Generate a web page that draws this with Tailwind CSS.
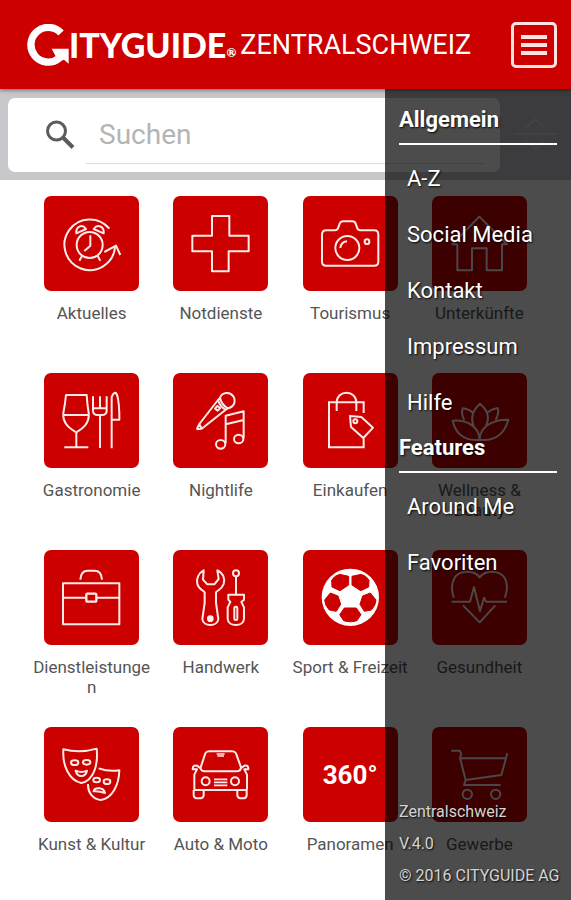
<!DOCTYPE html>
<html lang="de">
<head>
<meta charset="utf-8">
<meta name="viewport" content="width=device-width, initial-scale=1">
<title>Cityguide Zentralschweiz</title>
<script src="https://cdn.jsdelivr.net/npm/@tailwindcss/browser@4"></script>
</head>
<body class="bg-white font-['Roboto',sans-serif]">
<div class="flex min-h-screen flex-col">
  <header class="relative z-20 flex h-[89px] shrink-0 items-center bg-[#cd0000] pr-[14px] pl-[27px] text-white shadow-[0_1px_4px_rgba(0,0,0,0.5)]">
    <a href="#" aria-label="Cityguide" class="flex items-center">
      <svg class="h-[42px] w-[42px] shrink-0" viewBox="80 71 126 126" fill="none" aria-hidden="true">
        <path d="M182 98 A52 52 0 1 0 176 174" stroke="#fff" stroke-width="22"/>
        <path d="M154 145H205V190L191 178L176 184L166 168Z" fill="#fff"/>
      </svg>
      <span class="font-['Lato',sans-serif] text-[34px] leading-[40px] font-black">ITYGUIDE</span>
      <span class="mt-4 font-['Lato',sans-serif] text-[12px] leading-4 font-black">®</span>
    </a>
    <h1 class="ml-1 text-[27px] leading-8">ZENTRALSCHWEIZ</h1>
    <button type="button" aria-label="Menü" class="ml-auto flex h-[46px] w-[46px] shrink-0 flex-col items-center justify-center gap-1 rounded-[5px] border-3 border-[#ffe3e3]">
      <span class="h-1 w-[26px] bg-[#ffe3e3]"></span>
      <span class="h-1 w-[26px] bg-[#ffe3e3]"></span>
      <span class="h-1 w-[26px] bg-[#ffe3e3]"></span>
    </button>
  </header>

  <div class="relative flex-1">
    <form class="flex h-[91px] items-center bg-[#c8c7cc] pr-[14px] pl-2" role="search">
      <div class="flex h-[74px] flex-1 rounded-[7px] bg-white pr-[15px] pl-[37px]">
        <label for="q" aria-label="Suchen" class="flex w-[41px] items-center">
          <svg class="h-[30px] w-[30px]" viewBox="0 0 30 30" fill="none" stroke="#5c5c5c" aria-hidden="true"><circle cx="11.500" cy="11" r="9" stroke-width="3"/><path d="M18 17.500L28 27.500" stroke-width="4"/></svg>
        </label>
        <input id="q" type="text" placeholder="Suchen" class="my-2 h-[58px] w-0 flex-1 border-b border-[#dedede] px-[13px] text-[28px] placeholder:text-[#b4b4b4] focus:outline-none">
      </div>
      <button type="button" aria-label="Sortieren" class="ml-[14px]">
        <svg class="h-9 w-[43px]" viewBox="0 0 43 36" fill="none" stroke="#e4e4e8" stroke-width="1.500" aria-hidden="true"><path d="M12 11L21.500 2L31 11M0 17H43M12 23L21.500 32L31 23"/></svg>
      </button>
    </form>

    <nav aria-label="Kategorien" class="grid grid-cols-4 gap-y-[30px] px-[27px] pt-4 text-[17px] leading-5 text-[#555]">
      <a href="#" class="flex min-h-[147px] flex-col items-center gap-3">
        <svg class="h-[95px] w-[95px] rounded-[7px] bg-[#cd0000]" viewBox="41 31 285 285" fill="none" stroke="#ffeaea" stroke-width="6" stroke-linejoin="round" aria-hidden="true">
          <path d="M237 129A76 76 0 1 0 254 185M222 199L257 180L270 208"/>
          <circle cx="178" cy="178" r="39"/><path d="M180 149V180L162 196M155 211L147 225M202 211L210 225M138 143C136 122 155 114 167 130ZM190 130C202 114 222 122 220 143Z"/>
        </svg>
        <span class="w-[122px] text-center break-words">Aktuelles</span>
      </a>
      <a href="#" class="flex min-h-[147px] flex-col items-center gap-3">
        <svg class="h-[95px] w-[95px] rounded-[7px] bg-[#cd0000]" viewBox="428 31 285 285" fill="none" stroke="#ffeaea" stroke-width="6" stroke-linejoin="round" aria-hidden="true">
          <path d="M545 91H597V150H655V197H595V257H545V197H486V150H545Z"/>
        </svg>
        <span class="w-[122px] text-center break-words">Notdienste</span>
      </a>
      <a href="#" class="flex min-h-[147px] flex-col items-center gap-3">
        <svg class="h-[95px] w-[95px] rounded-[7px] bg-[#cd0000]" viewBox="37 31 285 285" fill="none" stroke="#ffeaea" stroke-width="6" stroke-linejoin="round" aria-hidden="true">
          <path d="M107 134H133Q141 134 143 125L147 114Q150 107 157 107H185Q193 107 195 114L199 125Q201 134 209 134H250Q263 134 263 147V228Q263 240 250 240H107Q94 240 94 228V147Q94 134 107 134Z"/>
          <circle cx="170" cy="187" r="36"/><path d="M149 187Q151 169 169 167"/><circle cx="229" cy="168" r="7"/>
        </svg>
        <span class="w-[122px] text-center break-words">Tourismus</span>
      </a>
      <a href="#" class="flex min-h-[147px] flex-col items-center gap-3">
        <svg class="h-[95px] w-[95px] rounded-[7px] bg-[#cd0000]" viewBox="424 31 285 285" fill="none" stroke="#ffeaea" stroke-width="6" stroke-linejoin="round" aria-hidden="true">
          <path d="M566 93L485 176H500V254H544V188H588V254H634V176H649Z"/>
        </svg>
        <span class="w-[122px] text-center break-words">Unterkünfte</span>
      </a>

      <a href="#" class="flex min-h-[147px] flex-col items-center gap-3">
        <svg class="h-[95px] w-[95px] rounded-[7px] bg-[#cd0000]" viewBox="41 24 285 285" fill="none" stroke="#ffeaea" stroke-width="6" stroke-linejoin="round" aria-hidden="true">
          <path d="M107 90H169Q171 120 175 144C178 175 158 190 138 202C118 190 96 175 99 144Q104 120 107 90ZM99 150H175M138 202V246M102 247H174M188 94V137Q188 148 200 150H217Q229 148 229 137V94M209 94V130M188 130H229M209 150V249M244 250V96Q250 81 257 84Q265 93 267 145V164H245"/>
        </svg>
        <span class="w-[122px] text-center break-words">Gastronomie</span>
      </a>
      <a href="#" class="flex min-h-[147px] flex-col items-center gap-3">
        <svg class="h-[95px] w-[95px] rounded-[7px] bg-[#cd0000]" viewBox="428 24 285 285" fill="none" stroke="#ffeaea" stroke-width="6" stroke-linejoin="round" aria-hidden="true">
          <path d="M569 99C574 82 598 78 609 94C619 112 608 128 593 130Q574 120 569 99L563 105Q569 125 586 134L593 130M563 105L507 177L514 191L586 134M507 177L499 193M514 191L499 193M561 123L570 129L562 137L554 131ZM586 235V152L640 139V220M586 178L640 165"/>
          <ellipse cx="571" cy="238" rx="14" ry="13"/><ellipse cx="625" cy="222" rx="14" ry="13"/>
        </svg>
        <span class="w-[122px] text-center break-words">Nightlife</span>
      </a>
      <a href="#" class="flex min-h-[147px] flex-col items-center gap-3">
        <svg class="h-[95px] w-[95px] rounded-[7px] bg-[#cd0000]" viewBox="37 24 285 285" fill="none" stroke="#ffeaea" stroke-width="6" aria-hidden="true">
          <path d="M219 144V112H115V247H219V221M138 138V113C138 73 197 73 197 113V138"/>
          <path d="M178 153L212 156L247 188L218 219L181 186Z" stroke-linejoin="round"/><circle cx="194" cy="169" r="6"/>
        </svg>
        <span class="w-[122px] text-center break-words">Einkaufen</span>
      </a>
      <a href="#" class="flex min-h-[147px] flex-col items-center gap-3">
        <svg class="h-[95px] w-[95px] rounded-[7px] bg-[#cd0000]" viewBox="424 24 285 285" fill="none" stroke="#ffeaea" stroke-width="6" stroke-linejoin="round" aria-hidden="true">
          <path d="M567 224C567 190 600 163 653 164C644 198 620 230 567 224C520 230 494 204 486 167C530 164 565 185 567 224ZM549 182C538 155 550 132 568 116C587 132 599 155 586 182M521 166C513 150 512 140 516 130Q534 132 547 143M615 165C623 150 625 140 621 129Q603 132 589 143"/>
        </svg>
        <span class="w-[122px] text-center break-words">Wellness &amp; Beauty</span>
      </a>

      <a href="#" class="flex min-h-[147px] flex-col items-center gap-3">
        <svg class="h-[95px] w-[95px] rounded-[7px] bg-[#cd0000]" viewBox="41 31 285 285" fill="none" stroke="#ffeaea" stroke-width="6" stroke-linejoin="round" aria-hidden="true">
          <path d="M98 131H267V254H98ZM98 174H167M199 174H267M150 120C151 101 160 93 172 93H193C207 93 214 103 215 120"/><rect x="168" y="162" width="30" height="24" rx="3" stroke-width="7"/>
        </svg>
        <span class="w-[122px] text-center break-words">Dienstleistungen</span>
      </a>
      <a href="#" class="flex min-h-[147px] flex-col items-center gap-3">
        <svg class="h-[95px] w-[95px] rounded-[7px] bg-[#cd0000]" viewBox="428 31 285 285" fill="none" stroke="#ffeaea" stroke-width="6" stroke-linejoin="round" aria-hidden="true">
          <path d="M520 92C504 100 497 118 501 133C505 148 518 152 523 158V190L516 238C518 262 562 262 564 238L557 190V158C563 151 575 148 580 133C585 116 578 99 561 92L565 118L552 134H531L518 120Z"/>
          <circle cx="540" cy="237" r="7" fill="#ffeaea"/><circle cx="617" cy="101" r="9"/>
          <path d="M617 111V163M594 165H641V180L633 187L641 203V237C640 262 593 262 592 237V203L600 187L594 180Z"/><rect x="612" y="201" width="9" height="40" rx="4"/>
        </svg>
        <span class="w-[122px] text-center break-words">Handwerk</span>
      </a>
      <a href="#" class="flex min-h-[147px] flex-col items-center gap-3">
        <svg class="h-[95px] w-[95px] rounded-[7px] bg-[#cd0000]" viewBox="37 31 285 285" fill="none" aria-hidden="true">
          <circle cx="179" cy="173" r="86" fill="#fff"/>
          <g fill="#cd0000" stroke="#cd0000" stroke-width="3" stroke-linejoin="round"><path d="M174 110V136L148 153L124 142L123 122Q131 108 147 104Z"/><path d="M184 110V136L210 153L234 142L235 122Q227 108 211 104Z"/><path d="M119 160L142 169L150 194L137 215L116 211Q103 198 102 181Z"/><path d="M239 160L216 169L208 194L221 215L242 211Q255 198 256 181Z"/><path d="M161 205H197L211 225L199 243Q179 250 159 243L147 225Z"/></g>
        </svg>
        <span class="w-[122px] text-center break-words">Sport &amp; Freizeit</span>
      </a>
      <a href="#" class="flex min-h-[147px] flex-col items-center gap-3">
        <svg class="h-[95px] w-[95px] rounded-[7px] bg-[#cd0000]" viewBox="424 31 285 285" fill="none" stroke="#ffeaea" stroke-width="6" stroke-linejoin="round" aria-hidden="true">
          <path d="M490 174C478 145 484 108 512 99C535 92 556 98 567 113C578 98 600 92 622 99C650 109 655 145 642 174M517 197L567 248L614 197M483 186H538L550 142L568 215L580 174L586 186H649"/>
        </svg>
        <span class="w-[122px] text-center break-words">Gesundheit</span>
      </a>

      <a href="#" class="flex min-h-[147px] flex-col items-center gap-3">
        <svg class="h-[95px] w-[95px] rounded-[7px] bg-[#cd0000]" viewBox="41 24 285 285" fill="none" stroke="#ffeaea" stroke-width="6" stroke-linejoin="round" aria-hidden="true">
          <path d="M99 91Q149 104 199 89C204 140 189 186 153 192C115 184 96 138 99 91ZM205 148Q235 159 267 154C266 197 246 239 211 243C186 240 172 219 173 195M136 155Q153 163 170 155Q166 171 153 171Q140 171 136 155ZM190 217C192 204 220 204 224 222Q207 216 190 217Z"/>
          <ellipse cx="133" cy="131" rx="11" ry="7"/><ellipse cx="169" cy="130" rx="11" ry="7"/><ellipse cx="199" cy="183" rx="10" ry="7"/><ellipse cx="230" cy="188" rx="10" ry="7"/>
        </svg>
        <span class="w-[122px] text-center break-words">Kunst &amp; Kultur</span>
      </a>
      <a href="#" class="flex min-h-[147px] flex-col items-center gap-3">
        <svg class="h-[95px] w-[95px] rounded-[7px] bg-[#cd0000]" viewBox="428 24 285 285" fill="none" stroke="#ffeaea" stroke-width="6" stroke-linejoin="round" aria-hidden="true">
          <path d="M511 145L525 103Q528 97 537 97H605Q614 97 617 103L632 145Q631 157 618 157H524Q510 157 511 145ZM511 148L500 140Q487 137 487 151H500L492 167V209Q492 213 498 213H644Q650 213 650 209V167L642 151H654Q655 137 642 140L632 148M490 213V229Q491 238 503 238Q519 239 520 229V213M621 213V229Q622 238 635 238Q648 239 649 229V213"/><path stroke-width="5" d="M551 181H591M551 190H591M551 199H591M559 105H583M561 111H581"/>
          <circle cx="526" cy="187" r="12"/><circle cx="614" cy="187" r="12"/>
        </svg>
        <span class="w-[122px] text-center break-words">Auto &amp; Moto</span>
      </a>
      <a href="#" class="flex min-h-[147px] flex-col items-center gap-3">
        <span class="flex h-[95px] w-[95px] items-center justify-center rounded-[7px] bg-[#cd0000] text-[26px] font-bold text-white">360°</span>
        <span class="w-[122px] text-center break-words">Panoramen</span>
      </a>
      <a href="#" class="flex min-h-[147px] flex-col items-center gap-3">
        <svg class="h-[95px] w-[95px] rounded-[7px] bg-[#cd0000]" viewBox="424 24 285 285" fill="none" stroke="#ffeaea" stroke-width="6" stroke-linejoin="round" aria-hidden="true">
          <path d="M482 95H507L512 105L508 117L525 183L632 168L650 103M509 118H643M525 183L520 198H630"/><circle cx="530" cy="226" r="14"/><circle cx="615" cy="226" r="14"/>
        </svg>
        <span class="w-[122px] text-center break-words">Gewerbe</span>
      </a>
    </nav>

    <aside class="absolute inset-y-0 right-0 z-10 flex w-[186px] flex-col bg-black/70 pt-4 pr-[14px] pb-2 pl-[14px] text-white [text-shadow:1px_1px_2px_rgba(0,0,0,0.9)]">
      <section>
        <h2 class="border-b-2 border-white pb-2 text-[22px] leading-[30px] font-bold">Allgemein</h2>
        <ul class="pt-1.5 pl-2 text-[22px] leading-[56px] whitespace-nowrap">
          <li><a href="#">A-Z</a></li>
          <li><a href="#">Social Media</a></li>
          <li><a href="#">Kontakt</a></li>
          <li><a href="#">Impressum</a></li>
          <li><a href="#">Hilfe</a></li>
        </ul>
      </section>
      <section class="mt-0.5">
        <h2 class="border-b-2 border-white pb-2 text-[22px] leading-[30px] font-bold">Features</h2>
        <ul class="pt-1.5 pl-2 text-[22px] leading-[56px] whitespace-nowrap">
          <li><a href="#">Around Me</a></li>
          <li><a href="#">Favoriten</a></li>
        </ul>
      </section>
      <footer class="mt-auto text-[16px] leading-8 whitespace-nowrap text-[#d4d4d4]">
        <p>Zentralschweiz</p>
        <p>V.4.0</p>
        <p>© 2016 CITYGUIDE AG</p>
      </footer>
    </aside>
  </div>
</div>
</body>
</html>
